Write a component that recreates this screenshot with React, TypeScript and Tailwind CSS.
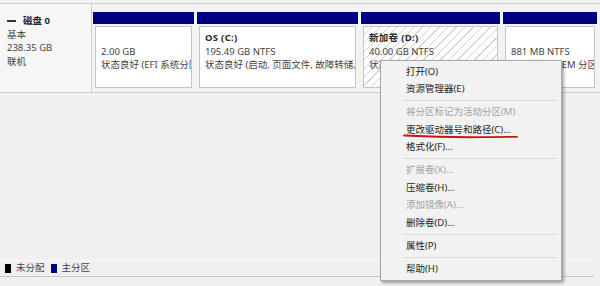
const menuItems: (
  | { label: string; disabled?: boolean; mark?: boolean }
  | "sep"
)[] = [
  { label: "打开(O)" },
  { label: "资源管理器(E)" },
  "sep",
  { label: "将分区标记为活动分区(M)", disabled: true },
  { label: "更改驱动器号和路径(C)...", mark: true },
  { label: "格式化(F)..." },
  "sep",
  { label: "扩展卷(X)...", disabled: true },
  { label: "压缩卷(H)..." },
  { label: "添加镜像(A)...", disabled: true },
  { label: "删除卷(D)..." },
  "sep",
  { label: "属性(P)" },
  "sep",
  { label: "帮助(H)" },
];

function Partition({
  width,
  title,
  size,
  status,
  hatched,
}: {
  width: string;
  title?: string;
  size: string;
  status: string;
  hatched?: boolean;
}) {
  return (
    <div className={`${width} flex flex-col shrink-0`}>
      <div className="h-[12px] bg-[#000080]" />
      <div className="flex-1 pt-[2px] px-[2px] pb-[4px]">
        <div
          className={`h-full border border-[#c4c4c4] px-[5px] pt-[4px] overflow-hidden whitespace-nowrap leading-[13.5px] ${
            hatched
              ? "bg-[repeating-linear-gradient(135deg,#ffffff_0px,#ffffff_5px,#d4d4d4_5px,#d4d4d4_6px)]"
              : "bg-white"
          }`}
        >
          <div className="h-[13.5px] font-bold text-[#2a2a2a] tracking-[0.3px]">{title}</div>
          <div>{size}</div>
          <div>{status}</div>
        </div>
      </div>
    </div>
  );
}

export default function App() {
  return (
    <div className="w-[600px] h-[286px] bg-[#f0f0f0] relative overflow-hidden font-['Segoe_UI','Noto_Sans','Noto_Sans_CJK_SC',sans-serif] text-[9.5px] text-[#444] flex flex-col">
      {/* Disk row */}
      <div className="mt-[3px] h-[90px] flex border-t border-b border-[#cfcfcf] bg-[#f3f3f3]">
        <div className="w-[92px] shrink-0 border-r border-[#cdcdcd] bg-[#f6f6f6] pl-[7px] pt-[10px] leading-[13.5px]">
          <div className="flex items-center gap-[7px] font-bold text-[#2a2a2a]">
            <span className="w-[9px] h-[2px] bg-[#333]" />
            <span>磁盘 0</span>
          </div>
          <div>基本</div>
          <div>238.35 GB</div>
          <div>联机</div>
        </div>
        <div className="flex-1 flex pt-[8px] pl-[1px] pr-[2px] gap-[3px]">
          <Partition width="w-[101px]" size="2.00 GB" status="状态良好 (EFI 系统分区)" />
          <Partition
            width="w-[161px]"
            title="OS  (C:)"
            size="195.49 GB NTFS"
            status="状态良好 (启动, 页面文件, 故障转储, 主分区)"
          />
          <Partition
            width="w-[139px]"
            title="新加卷  (D:)"
            size="40.00 GB NTFS"
            status="状态良好 (主分区)"
            hatched
          />
          <Partition
            width="w-[94px]"
            title=""
            size="881 MB NTFS"
            status="状态良好 (OEM 分区)"
          />
        </div>
      </div>

      <div className="flex-1" />

      {/* Legend */}
      <div className="h-[17px] border-t border-[#f8f8f8] border-b border-b-[#c4c4c4] flex items-center pl-[5px] gap-[6px] mr-[6px]">
        <span className="flex items-center gap-[5px]">
          <span className="w-[6px] h-[9px] bg-black" />
          未分配
        </span>
        <span className="flex items-center gap-[5px]">
          <span className="w-[6px] h-[9px] bg-[#000080]" />
          主分区
        </span>
      </div>
      <div className="h-[9px]" />

      {/* Context menu */}
      <div className="absolute left-[380px] top-[60px] w-[182px] bg-[#f2f2f2] border border-[#a8a8a8] shadow-[2px_2px_3px_rgba(0,0,0,0.35)] py-[2px]">
        {menuItems.map((item, i) =>
          item === "sep" ? (
            <div key={i} className="h-[5.5px] flex items-center pl-[22px] pr-[4px]">
              <div className="h-px w-full bg-[#dcdcdc]" />
            </div>
          ) : (
            <div
              key={i}
              className={`relative h-[17.5px] flex items-center pl-[25px] whitespace-nowrap ${
                item.disabled ? "text-[#a3a3a3]" : "text-[#1e1e1e]"
              }`}
            >
              {item.label}
              {item.mark && (
                <svg
                  className="absolute left-[22px] top-[12.5px]"
                  width="116"
                  height="5"
                  viewBox="0 0 116 5"
                >
                  <path
                    d="M1 1.5 Q40 3.5 78 3.2 T114 2.8"
                    stroke="#c8141e"
                    strokeWidth="1.8"
                    fill="none"
                    strokeLinecap="round"
                  />
                </svg>
              )}
            </div>
          )
        )}
      </div>
    </div>
  );
}
